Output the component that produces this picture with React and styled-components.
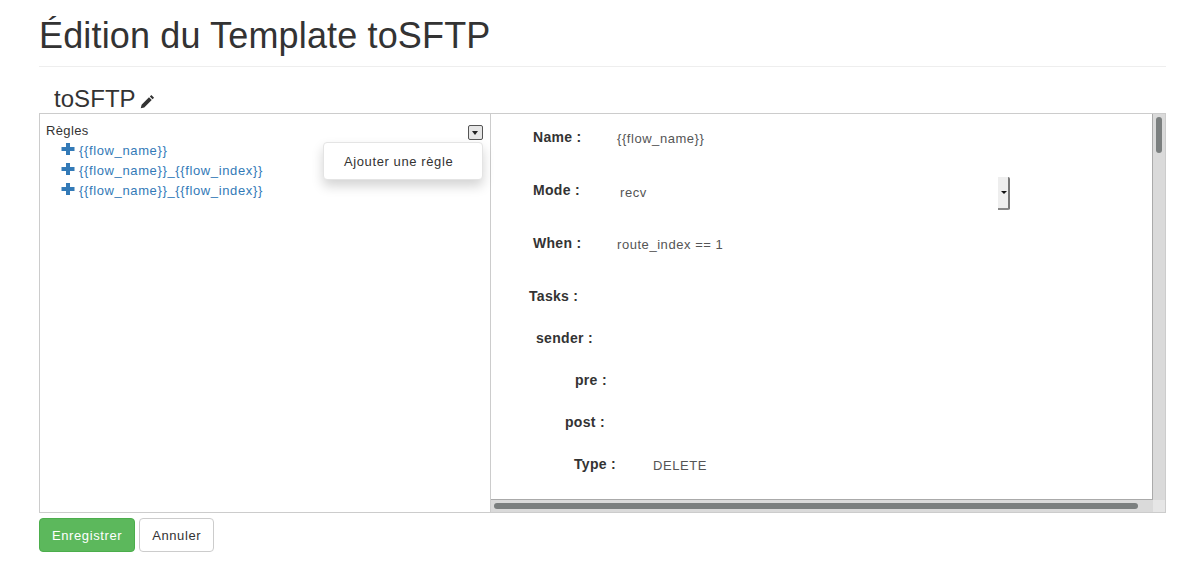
import React from 'react';
import styled, { createGlobalStyle } from 'styled-components';

const C = {
    text: '#333', muted: '#555', border: '#ccc', link: '#337ab7',
    green: '#5cb85c', greenDark: '#4cae4c', track: '#dadada', thumb: '#7b7f7f',
};

const Global = createGlobalStyle`
    html, body { margin: 0; padding: 0; background: #fff; }
    body {
        font-family: 'Liberation Sans', Arial, sans-serif;
        font-size: 13px;
        letter-spacing: 0.55px;
        color: ${C.text};
        overflow: hidden;
    }
`;

const Page = styled.div`
    width: 1127px;
    margin-left: 39px;
`;

const Header = styled.h1`
    margin: 0;
    height: 66px;
    border-bottom: 1px solid #eee;
    font-size: 36px;
    font-weight: 400;
    letter-spacing: 0.15px;
    line-height: 71px;
`;

const TitleRow = styled.div`
    display: flex;
    align-items: center;
    height: 28px;
    padding: 18px 0 0 15px;
    font-size: 24px;
    letter-spacing: 0.05px;
`;

const Pencil = styled.svg`
    width: 15px;
    height: 15px;
    margin: 4px 0 0 4px;
    fill: ${C.text};
`;

const Box = styled.div`
    display: flex;
    height: 400px;
    border: 1px solid ${C.border};
    box-sizing: border-box;
`;

const Tree = styled.div`
    position: relative;
    width: 451px;
    flex: none;
    padding: 9px 6px;
    box-sizing: border-box;
    border-right: 1px solid ${C.border};
`;

const TreeTitle = styled.div`
    height: 17px;
    line-height: 16px;
    letter-spacing: 0.35px;
    color: ${C.text};
`;

const TreeItem = styled.a`
    display: flex;
    align-items: center;
    height: 20px;
    padding-left: 15px;
    letter-spacing: 0.63px;
    color: ${C.link};
`;

const Plus = styled.svg`
    width: 14px;
    height: 14px;
    margin-right: 4px;
    margin-top: -2px;
    fill: ${C.link};
`;

const MenuToggle = styled.div`
    position: absolute;
    top: 11px;
    left: 428px;
    width: 15px;
    height: 15px;
    box-sizing: border-box;
    background: #e6e6e6;
    border: 1px solid #555;
    border-radius: 2px;
    &::after {
        content: '';
        position: absolute;
        left: 3px;
        top: 5px;
        border-left: 3.5px solid transparent;
        border-right: 3.5px solid transparent;
        border-top: 4px solid #222;
    }
`;

const Menu = styled.div`
    position: absolute;
    top: 28px;
    left: 283px;
    width: 160px;
    height: 38px;
    box-sizing: border-box;
    padding-left: 20px;
    line-height: 38px;
    letter-spacing: 0.6px;
    background: #fff;
    border: 1px solid #e4e4e4;
    border-radius: 4px;
    box-shadow: 0 6px 12px rgba(0, 0, 0, 0.175);
`;

const Detail = styled.div`
    flex: 1;
    min-width: 0;
    display: grid;
    grid-template-columns: 1fr 12px;
    grid-template-rows: 1fr 12px;
`;

const Form = styled.div`
    border-right: 1px solid #aaa;
    border-bottom: 1px solid #aaa;
    padding-top: 13px;
`;

const Row = styled.div`
    display: flex;
    align-items: flex-start;
    height: ${({ $h }) => $h}px;
    line-height: 20px;
    padding-left: ${({ $indent }) => $indent}px;
`;

const FieldLabel = styled.label`
    width: ${({ $w }) => $w}px;
    flex: none;
    font-weight: 700;
    font-size: 14px;
    letter-spacing: 0.3px;
    color: ${C.text};
`;

const Value = styled.span`
    padding-top: 2px;
    color: ${C.muted};
`;

const SelectBox = styled.div`
    position: relative;
    width: 393px;
    display: flex;
    align-items: center;
    height: 33px;
    margin-top: -3px;
    padding: 0 0 1px 3px;
    box-sizing: border-box;
    color: ${C.muted};
`;

const SelectArrow = styled.div`
    position: absolute;
    right: 0;
    top: 0;
    width: 12px;
    height: 33px;
    box-sizing: border-box;
    background: #eee;
    border-right: 2px solid #777;
    border-bottom: 2px solid #888;
    border-radius: 0 2px 2px 0;
    &::after {
        content: '';
        position: absolute;
        left: 3px;
        top: 14px;
        border-left: 3px solid transparent;
        border-right: 3px solid transparent;
        border-top: 3px solid #111;
    }
`;

const VTrack = styled.div`
    background: ${C.track};
    padding: 3px;
    box-sizing: border-box;
`;

const VThumb = styled.div`
    width: 6px;
    height: 36px;
    background: ${C.thumb};
    border-radius: 3px;
`;

const HTrack = styled.div`
    background: ${C.track};
    padding: 3px;
    box-sizing: border-box;
`;

const HThumb = styled.div`
    width: 644px;
    height: 6px;
    background: ${C.thumb};
    border-radius: 3px;
`;

const Corner = styled.div`
    background: #e6e6e6;
`;

const Actions = styled.div`
    display: flex;
    gap: 4px;
    margin-top: 5px;
`;

const Btn = styled.button`
    height: 34px;
    padding: 0 12px;
    font: 13px 'Liberation Sans', Arial, sans-serif;
    letter-spacing: 0.6px;
    border-radius: 4px;
    border: 1px solid ${({ $primary }) => ($primary ? C.greenDark : C.border)};
    background: ${({ $primary }) => ($primary ? C.green : '#fff')};
    color: ${({ $primary }) => ($primary ? '#fff' : C.text)};
`;

const rows = [
    { label: 'Name :', indent: 42, w: 84, h: 53, value: '{{flow_name}}' },
    { label: 'Mode :', indent: 42, w: 84, h: 53, select: 'recv' },
    { label: 'When :', indent: 42, w: 84, h: 53, value: 'route_index == 1' },
    { label: 'Tasks :', indent: 38, w: 84, h: 42 },
    { label: 'sender :', indent: 45, w: 84, h: 42 },
    { label: 'pre :', indent: 84, w: 84, h: 42 },
    { label: 'post :', indent: 74, w: 84, h: 42 },
    { label: 'Type :', indent: 83, w: 79, h: 42, value: 'DELETE' },
];

const rules = ['{{flow_name}}', '{{flow_name}}_{{flow_index}}', '{{flow_name}}_{{flow_index}}'];

export default function App() {
    return (
        <Page>
            <Global />
            <Header>Édition du Template toSFTP</Header>
            <TitleRow>
                toSFTP
                <Pencil viewBox="0 0 16 16">
                    <path d="M12.1 1 15 3.9l-1.6 1.6-2.9-2.9zM9.6 3.4l2.9 2.9-8 8L.8 15.2l.9-3.8z" />
                </Pencil>
            </TitleRow>
            <Box>
                <Tree>
                    <TreeTitle>Règles</TreeTitle>
                    {rules.map((rule, i) => (
                        <TreeItem key={i}>
                            <Plus viewBox="0 0 14 14"><path d="M5 1h4v4h4.5v4H9v4H5V9H.5V5H5z" /></Plus>
                            {rule}
                        </TreeItem>
                    ))}
                    <MenuToggle />
                    <Menu>Ajouter une règle</Menu>
                </Tree>
                <Detail>
                    <Form>
                        {rows.map((r) => (
                            <Row key={r.label} $h={r.h} $indent={r.indent}>
                                <FieldLabel $w={r.w}>{r.label}</FieldLabel>
                                {r.value && <Value>{r.value}</Value>}
                                {r.select && (
                                    <SelectBox>
                                        {r.select}
                                        <SelectArrow />
                                    </SelectBox>
                                )}
                            </Row>
                        ))}
                    </Form>
                    <VTrack><VThumb /></VTrack>
                    <HTrack><HThumb /></HTrack>
                    <Corner />
                </Detail>
            </Box>
            <Actions>
                <Btn $primary>Enregistrer</Btn>
                <Btn>Annuler</Btn>
            </Actions>
        </Page>
    );
}
